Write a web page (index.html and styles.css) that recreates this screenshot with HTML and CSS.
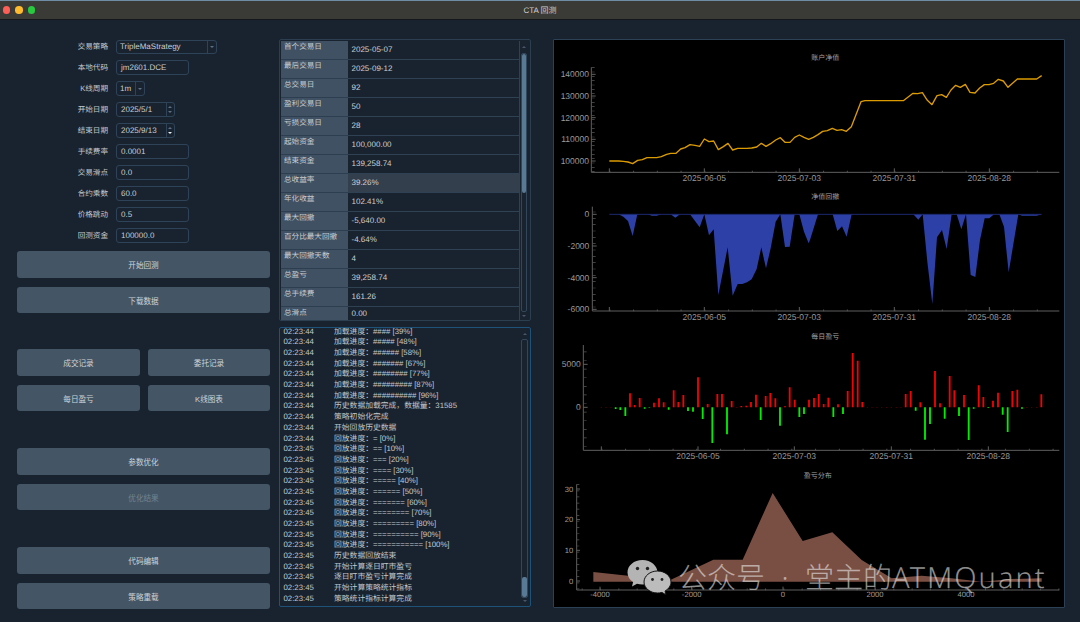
FILE: index.html
```html
<!DOCTYPE html>
<html lang="zh">
<head>
<meta charset="utf-8">
<title>CTA 回测</title>
<link rel="stylesheet" href="styles.css">
</head>
<body>
<div class="window">
  <header class="titlebar">
    <div class="lights"><i class="light red"></i><i class="light yellow"></i><i class="light green"></i></div>
    <div class="title">CTA 回测</div>
  </header>
  <main class="main">
    <section class="left">
      <div class="form">
        <div class="row"><label>交易策略</label><div class="field combo w-strategy"><span class="val">TripleMaStrategy</span><span class="drop"><i class="tri-down"></i></span></div></div>
        <div class="row"><label>本地代码</label><div class="field w-input"><span class="val">jm2601.DCE</span></div></div>
        <div class="row"><label>K线周期</label><div class="field combo w-period"><span class="val">1m</span><span class="drop"><i class="tri-down"></i></span></div></div>
        <div class="row"><label>开始日期</label><div class="field date w-date"><span class="val">2025/5/1</span><span class="spin"><i class="tri-up"></i><i class="tri-down"></i></span></div></div>
        <div class="row"><label>结束日期</label><div class="field date w-date"><span class="val">2025/9/13</span><span class="spin"><i class="tri-up"></i><i class="tri-down on"></i></span></div></div>
        <div class="row"><label>手续费率</label><div class="field w-input"><span class="val">0.0001</span></div></div>
        <div class="row"><label>交易滑点</label><div class="field w-input"><span class="val">0.0</span></div></div>
        <div class="row"><label>合约乘数</label><div class="field w-input"><span class="val">60.0</span></div></div>
        <div class="row"><label>价格跳动</label><div class="field w-input"><span class="val">0.5</span></div></div>
        <div class="row"><label>回测资金</label><div class="field w-input"><span class="val">100000.0</span></div></div>
      </div>
      <div class="btn-group first">
        <button class="btn">开始回测</button>
        <button class="btn">下载数据</button>
      </div>
      <div class="btn-grid">
        <button class="btn">成交记录</button>
        <button class="btn">委托记录</button>
        <button class="btn">每日盈亏</button>
        <button class="btn">K线图表</button>
      </div>
      <div class="btn-group">
        <button class="btn">参数优化</button>
        <button class="btn off">优化结果</button>
      </div>
      <div class="btn-group">
        <button class="btn">代码编辑</button>
        <button class="btn">策略重载</button>
      </div>
    </section>

    <section class="middle">
      <div class="stats">
        <table class="stat-table">
          <tr><th>首个交易日</th><td>2025-05-07</td></tr>
          <tr><th>最后交易日</th><td>2025-09-12</td></tr>
          <tr><th>总交易日</th><td>92</td></tr>
          <tr><th>盈利交易日</th><td>50</td></tr>
          <tr><th>亏损交易日</th><td>28</td></tr>
          <tr><th>起始资金</th><td>100,000.00</td></tr>
          <tr><th>结束资金</th><td>139,258.74</td></tr>
          <tr class="hot"><th>总收益率</th><td>39.26%</td></tr>
          <tr><th>年化收益</th><td>102.41%</td></tr>
          <tr><th>最大回撤</th><td>-5,640.00</td></tr>
          <tr><th>百分比最大回撤</th><td>-4.64%</td></tr>
          <tr><th>最大回撤天数</th><td>4</td></tr>
          <tr><th>总盈亏</th><td>39,258.74</td></tr>
          <tr><th>总手续费</th><td>161.26</td></tr>
          <tr class="cut"><th>总滑点</th><td>0.00</td></tr>
        </table>
        <div class="scroll stats-scroll">
          <i class="tri-up dim"></i>
          <div class="track"><div class="thumb"></div></div>
          <i class="tri-down dim"></i>
        </div>
      </div>
      <div class="log">
        <div class="log-lines">
          <p><b>02:23:44</b>加载进度：#### [39%]</p>
          <p><b>02:23:44</b>加载进度：##### [48%]</p>
          <p><b>02:23:44</b>加载进度：###### [58%]</p>
          <p><b>02:23:44</b>加载进度：####### [67%]</p>
          <p><b>02:23:44</b>加载进度：######## [77%]</p>
          <p><b>02:23:44</b>加载进度：######### [87%]</p>
          <p><b>02:23:44</b>加载进度：########## [96%]</p>
          <p><b>02:23:44</b>历史数据加载完成，数据量：31585</p>
          <p><b>02:23:44</b>策略初始化完成</p>
          <p><b>02:23:44</b>开始回放历史数据</p>
          <p><b>02:23:44</b>回放进度：= [0%]</p>
          <p><b>02:23:45</b>回放进度：== [10%]</p>
          <p><b>02:23:45</b>回放进度：=== [20%]</p>
          <p><b>02:23:45</b>回放进度：==== [30%]</p>
          <p><b>02:23:45</b>回放进度：===== [40%]</p>
          <p><b>02:23:45</b>回放进度：====== [50%]</p>
          <p><b>02:23:45</b>回放进度：======= [60%]</p>
          <p><b>02:23:45</b>回放进度：======== [70%]</p>
          <p><b>02:23:45</b>回放进度：========= [80%]</p>
          <p><b>02:23:45</b>回放进度：========== [90%]</p>
          <p><b>02:23:45</b>回放进度：=========== [100%]</p>
          <p><b>02:23:45</b>历史数据回放结束</p>
          <p><b>02:23:45</b>开始计算逐日盯市盈亏</p>
          <p><b>02:23:45</b>逐日盯市盈亏计算完成</p>
          <p><b>02:23:45</b>开始计算策略统计指标</p>
          <p><b>02:23:45</b>策略统计指标计算完成</p>
        </div>
        <div class="scroll log-scroll">
          <i class="tri-up dim"></i>
          <div class="track"><div class="thumb"></div></div>
          <i class="tri-down dim"></i>
        </div>
      </div>
    </section>

    <section class="charts">
      <svg class="chart c1" viewBox="12 15 1530 432">
        <text class="ct" x="826" y="76">账户净值</text>
        <path class="axis" d="M124 97V412H1528"/>
        <path class="axis" d="M124 118H137M124 183H137M124 248H137M124 313H137M124 378H137M178 412V400M463 412V400M748 412V400M1033 412V400M1318 412V400"/>
        <line class="minor-y" x1="129" y1="97" x2="129" y2="412"/>
        <line class="minor-x" x1="178" y1="410" x2="1528" y2="410"/>
        <polyline class="equity" points="178,378 192,378 206,378 220,379 234,381 248,386 263,376 277,374 291,368 305,368 320,368 334,365 350,358 362,355 378,355 392,342 405,338 420,329 435,331 449,334 463,312 477,320 491,318 505,344 520,335 534,325 548,345 563,340 577,340 591,340 605,339 620,336 634,325 648,334 662,326 677,315 691,308 705,322 720,322 734,307 748,300 762,307 776,313 790,307 804,299 818,289 832,287 847,280 861,286 875,284 889,289 904,275 933,200 945,197 1060,197 1089,175 1103,176 1117,173 1132,196 1146,209 1161,182 1175,179 1189,187 1203,165 1217,151 1231,157 1246,148 1260,172 1275,174 1289,159 1303,149 1317,149 1331,145 1345,133 1360,138 1374,157 1402,132 1460,132 1475,122"/>
        <g class="yl"><text x="117" y="127">140000</text><text x="117" y="192">130000</text><text x="117" y="257">120000</text><text x="117" y="322">110000</text><text x="117" y="387">100000</text></g>
        <g class="xl"><text x="463" y="438">2025-06-05</text><text x="748" y="438">2025-07-03</text><text x="1033" y="438">2025-07-31</text><text x="1318" y="438">2025-08-28</text></g>
      </svg>
      <svg class="chart c2" viewBox="12 -3 1530 438">
        <text class="ct" x="826" y="43">净值回撤</text>
        <path class="area-dd" d="M178 88L206 88 220 95 234 108 248 153 262 88 295 88 305 92 320 92 334 88 362 88 376 98 390 88 420 88 449 127 463 88 477 151 491 133 505 330 533 187 548 332 563 297 577 297 591 292 605 283 620 252 634 187 648 250 662 190 677 110 691 88 705 186 719 185 734 88 748 88 762 140 776 175 780 165 804 88 848 88 862 138 876 124 890 155 905 88 1090 88 1105 104 1118 88 1132 230 1147 357 1161 157 1176 135 1190 192 1205 88 1220 88 1234 133 1248 88 1262 270 1276 276 1290 165 1304 100 1318 100 1332 88 1348 88 1362 125 1376 262 1405 88 1416 92 1460 92 1475 88Z"/>
        <path class="zero" d="M178 88H1475"/>
        <path class="axis" d="M127 65V378H1528"/>
        <path class="axis" d="M127 88H140M127 183H140M127 278H140M127 373H140M178 378V366M463 378V366M748 378V366M1033 378V366M1318 378V366"/>
        <line class="minor-y dd" x1="132" y1="65" x2="132" y2="378"/>
        <line class="minor-x" x1="178" y1="376" x2="1528" y2="376"/>
        <g class="yl"><text x="118" y="97">0</text><text x="118" y="192">-2000</text><text x="118" y="287">-4000</text><text x="118" y="382">-6000</text></g>
        <g class="xl"><text x="463" y="404">2025-06-05</text><text x="748" y="404">2025-07-03</text><text x="1033" y="404">2025-07-31</text><text x="1318" y="404">2025-08-28</text></g>
      </svg>
      <svg class="chart c3" viewBox="12 0 1530 408">
        <text class="ct" x="826" y="26">每日盈亏</text>
        <path class="axis" d="M100 45V361H1528"/>
        <path class="axis" d="M100 103H113M100 232H113M154 361V349M444 361V349M733 361V349M1024 361V349M1315 361V349"/>
        <line class="minor-y pnl" x1="105" y1="45" x2="105" y2="361"/>
        <line class="minor-x" x1="154" y1="359" x2="1528" y2="359"/>
        <path class="bar-dot" d="M154 232v1.500M168 232v1.500M183 232v1.500M952 232v1.500M966 232v1.500M981 232v1.500M995 232v1.500M1010 232v1.500M1024 232v1.500M1039 232v1.500M1053 232v1.500M1430 232v1.500M1445 232v1.500M1460 232v1.500"/>
        <path class="bar-up" d="M240 232V190M254 232V225M269 232V204M312 232V218M327 232V205M341 232V217M371 232V181M385 232V216M400 232V195M444 232V142M473 232V222M502 232V192M516 232V192M545 232V213M560 232V231M574 232V228M589 232V227M603 232V216M618 232V194M647 232V198M661 232V189M676 232V205M705 232V229M719 232V172M734 232V209M777 232V209M792 232V204M806 232V192M821 232V222M835 232V203M864 232V223M893 232V183M908 232V69M923 232V92M937 232V216M1067 232V192M1082 232V183M1111 232V217M1155 232V123M1170 232V220M1199 232V138M1213 232V181M1242 232V195M1286 232V166M1300 232V201M1329 232V212M1344 232V188M1387 232V183M1402 232V179M1474 232V193"/>
        <path class="bar-down" d="M197 232V237M211 232V240M226 232V258M284 232V236M298 232V233M356 232V239M414 232V243M429 232V245M458 232V267M487 232V339M531 232V313M632 232V270M690 232V287M748 232V261M762 232V252M850 232V261M879 232V252M1097 232V242M1125 232V329M1140 232V282M1184 232V266M1227 232V258M1256 232V330M1271 232V236M1315 232V234M1358 232V254M1373 232V306M1416 232V236"/>
        <g class="yl"><text x="92" y="112">5000</text><text x="92" y="241">0</text></g>
        <g class="xl"><text x="444" y="387">2025-06-05</text><text x="733" y="387">2025-07-03</text><text x="1024" y="387">2025-07-31</text><text x="1315" y="387">2025-08-28</text></g>
      </svg>
      <svg class="chart c4" viewBox="12 3 1530 423">
        <text class="ct" x="803" y="39">盈亏分布</text>
        <path class="area-hist" d="M130 321L262 335 350 350 388 332 490 284 578 284 668 84 758 228 847 202 935 285 1025 340 1115 332 1205 340 1295 350 1385 342 1475 340V350H130Z"/>
        <path class="axis" d="M80 58V375H1528"/>
        <path class="axis" d="M80 72H90M80 164H90M80 256H90M80 348H90M150 375V365M425 375V365M699 375V365M975 375V365M1248 375V365"/>
        <line class="minor-y hist" x1="84" y1="58" x2="84" y2="375"/>
        <line class="minor-x hist" x1="95" y1="373" x2="1528" y2="373"/>
        <g class="yl small"><text x="70" y="80">30</text><text x="70" y="172">20</text><text x="70" y="264">10</text><text x="70" y="356">0</text></g>
        <g class="xl small"><text x="150" y="397">-4000</text><text x="425" y="397">-2000</text><text x="699" y="397">0</text><text x="975" y="397">2000</text><text x="1248" y="397">4000</text></g>
      </svg>
    </section>
  </main>

  <div class="watermark">
    <svg class="wx" viewBox="0 0 46 38">
      <path class="wx-big" d="M16.500 1C8 1 1.500 6.500 1.500 13.500c0 4 2.200 7.300 5.600 9.600L6 27.500l5-2.800c1.700.5 3.500.8 5.500.8 8.500 0 15-5.500 15-12S25 1 16.500 1z"/>
      <circle class="wx-eye" cx="11.500" cy="9.500" r="1.700"/><circle class="wx-eye" cx="21.500" cy="9.500" r="1.700"/>
      <path class="wx-small" d="M31.500 12C24 12 18 17 18 23s6 11 13.500 11c1.500 0 3-.2 4.400-.6l4.100 2.400-1-3.700C42.500 30 45 26.800 45 23c0-6-6-11-13.500-11z"/>
      <circle class="wx-eye" cx="26.500" cy="20.500" r="1.400"/><circle class="wx-eye" cx="36" cy="20.500" r="1.400"/>
    </svg>
    <span class="wm-text">公众号<span class="wm-dot">·</span>堂主的<span class="wm-latin">ATMQuant</span></span>
  </div>
</div>
</body>
</html>
```

FILE: styles.css
```css
* { box-sizing: border-box; }
html, body { margin: 0; padding: 0; background: #18232f; }
body { font-family: "Liberation Sans", "Noto Sans CJK SC", sans-serif; color: #c9cdd1; font-size: 7.8px; text-rendering: geometricPrecision; }
.window { position: relative; width: 1080px; height: 622px; overflow: hidden; background: #18232f; }

.titlebar { position: relative; height: 20px; background: #3a3a37; border-top: 1px solid #6f8ea6; border-bottom: 1px solid #14181d; display: flex; align-items: center; justify-content: center; }
.lights { position: absolute; left: 2.500px; top: 5px; display: flex; gap: 5.200px; }
.light { display: block; width: 7.500px; height: 7.500px; border-radius: 50%; }
.red { background: #fe5f57; } .yellow { background: #febb2e; } .green { background: #28c83f; }
.title { font-size: 8px; color: #cfcfcd; }

.main { display: flex; padding: 19px 0 0 17px; }
.left { width: 253px; flex: none; }
.middle { width: 252px; margin-left: 9px; flex: none; display: flex; flex-direction: column; gap: 6.500px; }
.charts { width: 512px; height: 569px; margin-left: 21.500px; flex: none; background: #000; border: 1.500px solid #2c4056; border-radius: 1px; display: flex; flex-direction: column; }

.form { display: flex; flex-direction: column; gap: 6.400px; padding-top: .500px; }
.row { display: flex; align-items: center; height: 14.600px; }
.row label { width: 91px; text-align: right; margin-right: 8px; font-size: 7.600px; color: #c5c9cd; }
.field { height: 100%; display: flex; align-items: center; border: 1px solid #2e4358; border-radius: 3px; background: #18232f; color: #c9ced2; font-size: 8px; }
.val { padding-left: 4px; flex: 1; }
.combo .val { padding-left: 3px; }
.w-strategy { width: 100.500px; }
.w-input { width: 73px; }
.w-period { width: 28.500px; }
.w-date { width: 59px; }
.drop { width: 8.500px; height: 100%; border-left: 1px solid #2e4358; display: flex; align-items: center; justify-content: center; flex: none; }
.spin { width: 8.500px; height: 100%; border-left: 1px solid #2e4358; display: flex; flex-direction: column; align-items: center; justify-content: space-around; padding: 1px 0; flex: none; }
.tri-down, .tri-up { display: block; width: 0; height: 0; border-left: 2.500px solid transparent; border-right: 2.500px solid transparent; }
.tri-down { border-top: 2.500px solid #5e7083; }
.tri-up { border-bottom: 2.500px solid #5e7083; }
.tri-down.on { border-top-color: #e8ecef; }
.tri-up.dim { border-bottom-color: #46586a; }
.tri-down.dim { border-top-color: #46586a; }

.btn { display: block; width: 100%; height: 26.500px; padding: 0; border: 0; border-radius: 3px; background: #445666; color: #ced3d7; font: inherit; font-size: 7.600px; }
.btn.off { color: #72838f; }
.btn-group { display: flex; flex-direction: column; gap: 9px; margin-top: 37px; }
.btn-group.first { margin-top: 8.500px; }
.btn-grid { display: grid; grid-template-columns: 123px 122px; column-gap: 8px; row-gap: 9px; margin-top: 36px; }

.stats { height: 281.500px; display: flex; border: 1px solid #2c3e50; border-radius: 2px; padding: 1px 0 0 1px; overflow: hidden; }
.stat-table { width: 237.500px; flex: none; border-collapse: separate; border-spacing: 0; table-layout: fixed; align-self: flex-start; }
.stat-table th { width: 67px; height: 19px; padding: 1px 0 0 3px; vertical-align: top; text-align: left; font-weight: normal; background: #3f5163; border-bottom: 1px solid #2c3e50; color: #c9cdd1; font-size: 7.600px; line-height: 10px; }
.stat-table td { height: 19px; padding: 0 0 1px 3.500px; border-bottom: 1px solid #2f4254; color: #ccd0d4; font-size: 8px; }
.stat-table .hot td { background: #333f4d; }
.stat-table .cut td, .stat-table .cut th { height: 14px; border-bottom: 0; }
.stats-scroll { border-left: 1px solid #2f4254; }

.scroll { flex: 1; display: flex; flex-direction: column; align-items: center; gap: 2.500px; padding: 5px 1.500px 3px 0; }
.track { flex: 1; width: 6.500px; border: .500px solid #33475a; border-radius: 2px; }
.thumb { width: 100%; background: #587a94; border-radius: 2px; }
.stats-scroll .track { margin-top: 2px; }
.stats-scroll .thumb { height: 139px; }
.log-scroll { flex: none; width: 12.500px; padding-bottom: 4px; }
.log-scroll .track { margin-top: 1px; display: flex; align-items: flex-end; }
.log-scroll .thumb { height: 20px; }

.log { height: 280px; display: flex; border: 1px solid #1f5278; border-radius: 2px; overflow: hidden; }
.log-lines { flex: none; width: 239px; height: 100%; display: flex; flex-direction: column; justify-content: flex-end; padding: 0 0 1.500px 3.500px; overflow: hidden; }
.log-lines p { margin: 0; height: 10.700px; flex: none; line-height: 10.700px; white-space: nowrap; color: #c3c8cc; }
.log-lines b { display: inline-block; width: 50.500px; font-weight: normal; }

.chart { display: block; width: 510px; flex: none; }
.c1 { height: 144px; } .c2 { height: 146px; } .c3 { height: 136px; } .c4 { height: 141px; }
.chart text { font-family: "Liberation Sans", "Noto Sans CJK SC", sans-serif; }
.ct { font-size: 21px; fill: #a4a4a4; text-anchor: middle; }
.axis { fill: none; stroke: #5f5f5f; stroke-width: 3; }
.minor-y, .minor-x { fill: none; stroke: #555; }
.minor-y { stroke-width: 10; stroke-dasharray: 2 11; }
.minor-y.dd { stroke-dasharray: 2 17; stroke-dashoffset: 4; }
.minor-y.pnl { stroke-dasharray: 2 23.800; stroke-dashoffset: 6; }
.minor-y.hist { stroke-dasharray: 2 16.400; stroke-width: 8; }
.minor-x { stroke-width: 5; stroke-dasharray: 3 68.250; }
.minor-x.hist { stroke-dasharray: 3 52; }
.yl text { font-size: 25.500px; fill: #9b9b9b; text-anchor: end; }
.xl text { font-size: 25.500px; fill: #9b9b9b; text-anchor: middle; }
.yl.small text, .xl.small text { font-size: 23px; }
.equity { fill: none; stroke: #dc9c00; stroke-width: 4; stroke-linejoin: round; }
.area-dd { fill: #2d40a8; }
.zero { stroke: #1c2a70; stroke-width: 3; fill: none; }
.bar-up { stroke: #f60000; stroke-width: 5.500; fill: none; }
.bar-down { stroke: #00ee00; stroke-width: 5.500; fill: none; }
.bar-dot { stroke: #8a0000; stroke-width: 4; fill: none; }
.area-hist { fill: #7a4f43; }

.watermark { position: absolute; left: 626px; top: 559px; display: flex; align-items: center; gap: 6px; pointer-events: none; }
.wx { display: block; width: 46px; height: 38px; flex: none; }
.wx-big { fill: #b4b4b4; }
.wx-small { fill: #bcbcbc; stroke: #111; stroke-width: 1; }
.wx-eye { fill: #222; }
.wm-text { font-family: "Noto Sans", "Noto Sans CJK SC", sans-serif; font-size: 29px; font-weight: 300; line-height: 36px; color: rgba(226,226,226,.64); white-space: nowrap; }
.wm-dot { display: inline-block; width: 40px; text-align: center; }
.wm-latin { letter-spacing: 2px; }
```
